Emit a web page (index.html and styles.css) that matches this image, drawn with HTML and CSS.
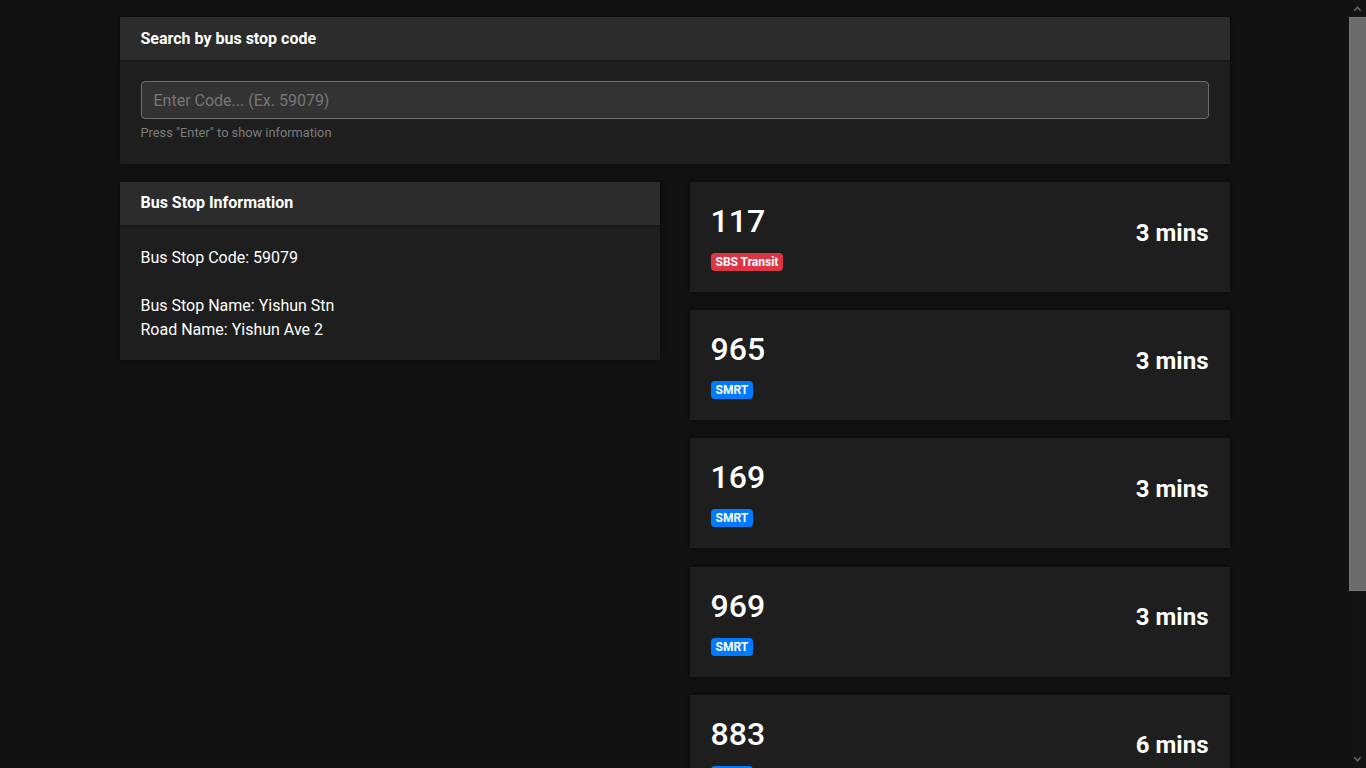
FILE: index.html
```html
<!DOCTYPE html>
<html lang="en">
<head>
<meta charset="utf-8">
<title>Bus Arrival</title>
<link rel="stylesheet" href="styles.css">
</head>
<body>
<div class="container">
  <section class="card search-card">
    <div class="card-header">Search by bus stop code</div>
    <div class="card-body">
      <input class="code-input" type="text" placeholder="Enter Code... (Ex. 59079)">
      <small class="form-text">Press "Enter" to show information</small>
    </div>
  </section>

  <div class="row">
    <div class="col">
      <section class="card">
        <div class="card-header">Bus Stop Information</div>
        <div class="card-body info">
          Bus Stop Code: 59079<br><br>
          Bus Stop Name: Yishun Stn<br>
          Road Name: Yishun Ave 2
        </div>
      </section>
    </div>
    <div class="col buses">
      <article class="card bus">
        <div class="bus-left">
          <h2 class="bus-no">117</h2>
          <div><span class="badge red">SBS Transit</span></div>
        </div>
        <h4 class="eta">3 mins</h4>
      </article>
      <article class="card bus">
        <div class="bus-left">
          <h2 class="bus-no">965</h2>
          <div><span class="badge blue">SMRT</span></div>
        </div>
        <h4 class="eta">3 mins</h4>
      </article>
      <article class="card bus">
        <div class="bus-left">
          <h2 class="bus-no">169</h2>
          <div><span class="badge blue">SMRT</span></div>
        </div>
        <h4 class="eta">3 mins</h4>
      </article>
      <article class="card bus">
        <div class="bus-left">
          <h2 class="bus-no">969</h2>
          <div><span class="badge blue">SMRT</span></div>
        </div>
        <h4 class="eta">3 mins</h4>
      </article>
      <article class="card bus">
        <div class="bus-left">
          <h2 class="bus-no">883</h2>
          <div><span class="badge blue">SMRT</span></div>
        </div>
        <h4 class="eta">6 mins</h4>
      </article>
      <article class="card bus">
        <div class="bus-left">
          <h2 class="bus-no">858</h2>
          <div><span class="badge red">SBS Transit</span></div>
        </div>
        <h4 class="eta">7 mins</h4>
      </article>
    </div>
  </div>
</div>

<div class="scrollbar" aria-hidden="true">
  <svg class="arrow up" width="17" height="17" viewBox="0 0 17 17"><path d="M4.5 11 L8.5 6 L12.5 11 L10.8 11 L8.5 8.4 L6.2 11 Z" fill="#6a6a6a"/></svg>
  <div class="thumb"></div>
  <svg class="arrow down" width="17" height="17" viewBox="0 0 17 17"><path d="M4.5 6 L8.5 11 L12.5 6 L10.8 6 L8.5 8.6 L6.2 6 Z" fill="#6a6a6a"/></svg>
</div>
</body>
</html>
```

FILE: styles.css
```css
html {
  background: #121212;
}
* { box-sizing: border-box; }
body {
  margin: 0;
  padding-right: 17px;
  background: #121212;
  color: #fff;
  font-family: Roboto, "Liberation Sans", sans-serif;
  font-size: 16px;
  line-height: 1.5;
}
.container {
  width: 1110px;
  margin: 0 auto;
  padding: 17px 0 16px;
}
.card {
  background: #1e1e1e;
  box-shadow: 0 0 8px rgba(0, 0, 0, 0.45);
  margin-bottom: 18px;
}
.card-header {
  background: #2c2c2c;
  padding: 9px 21px 10px;
  font-weight: 700;
  line-height: 24px;
  box-shadow: 0 1px 2px rgba(0, 0, 0, 0.25);
}
.search-card .card-header {
  padding: 10px 21px 9px;
}
.card-body {
  padding: 21px 21px 22px;
}
.code-input {
  display: block;
  width: 100%;
  height: 38px;
  padding: 6px 12px;
  font: inherit;
  color: #ddd;
  background: #333;
  border: 1px solid #6e6e6e;
  border-radius: 4px;
  outline: none;
}
.code-input::placeholder { color: #777; }
.form-text {
  display: block;
  margin-top: 4px;
  font-size: 12.8px;
  line-height: 19px;
  color: #7d7d7d;
}
.row {
  display: flex;
  gap: 30px;
  align-items: flex-start;
}
.col { flex: 1 1 0; min-width: 0; }
.info {
  padding: 21px 21px 18px;
  line-height: 24px;
}
.bus {
  display: flex;
  justify-content: space-between;
  align-items: center;
  padding: 20px 21px;
  margin-bottom: 18.2px;
}
.bus-no {
  margin: 0 0 10px;
  font-size: 32px;
  font-weight: 500;
  line-height: 38px;
}
.bus-left div { line-height: 22px; }
.badge {
  display: inline-block;
  padding: 3px 5px;
  font-size: 12px;
  font-weight: 700;
  line-height: 12px;
  border-radius: 4px;
  color: #fff;
  vertical-align: 0;
}
.red { background: #dc3545; }
.blue { background: #007bff; }
.eta {
  margin: 0 0 8px;
  font-size: 24px;
  font-weight: 700;
  line-height: 29px;
}

/* simulated dark page scrollbar */
.scrollbar {
  position: fixed;
  top: 0;
  right: 0;
  width: 17px;
  height: 100vh;
  background: #131313;
  display: flex;
  flex-direction: column;
}
.arrow { display: block; flex: none; }
.thumb {
  flex: none;
  height: 574px;
  background: #6c6c6c;
  border: 1px solid #7a7a7a;
  border-right: none;
}
.arrow.down { margin-top: auto; }
```
